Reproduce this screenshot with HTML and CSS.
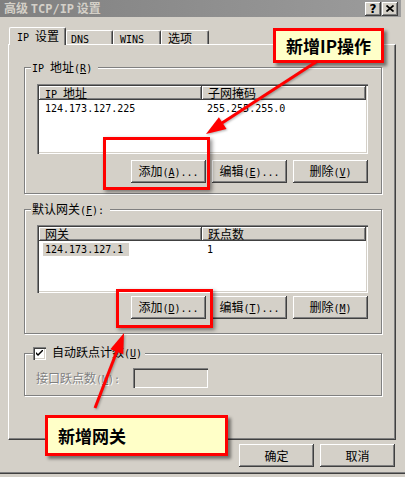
FILE: index.html
```html
<!DOCTYPE html>
<html lang="zh-CN">
<head>
    <meta charset="UTF-8">
    <meta name="viewport" content="width=device-width, initial-scale=1.0">
    <title>高级 TCP/IP 设置</title>
    <link rel="stylesheet" href="styles.css">
</head>
<body>
    <div class="window">
        <div class="titlebar">
            <span class="title">高级 <span class="en">TCP/IP</span> 设置</span>
            <div class="caption-btns">
                <span class="cap-btn">?</span>
                <span class="cap-btn">
                    <svg width="8" height="7" viewBox="0 0 8 7"><path d="M0.5 0.5 L7.5 6.5 M7.5 0.5 L0.5 6.5" stroke="#000" stroke-width="1.7"/></svg>
                </span>
            </div>
        </div>

        <div class="tabs">
            <div class="tab active"><span class="en">IP </span>设置</div>
            <div class="tab tab-dns"><span class="en">DNS</span></div>
            <div class="tab tab-wide"><span class="en">WINS</span></div>
            <div class="tab tab-wide">选项</div>
        </div>

        <div class="panel">
            <!-- IP addresses -->
            <fieldset class="group group-ip">
                <legend><span class="en">IP </span>地址<span class="en">(<u>R</u>)</span></legend>
                <div class="listview lv-ip">
                    <div class="lv-head">
                        <div class="c1"><span class="en">IP </span>地址</div>
                        <div class="c2">子网掩码</div>
                    </div>
                    <div class="lv-row">
                        <div class="c1"><span class="en">124.173.127.225</span></div>
                        <div class="c2"><span class="en">255.255.255.0</span></div>
                    </div>
                </div>
                <div class="btn-row row-ip">
                    <button class="btn">添加<span class="en">(<u>A</u>)...</span></button>
                    <button class="btn">编辑<span class="en">(<u>E</u>)...</span></button>
                    <button class="btn">删除<span class="en">(<u>V</u>)</span></button>
                </div>
            </fieldset>

            <!-- default gateways -->
            <fieldset class="group group-gw">
                <legend>默认网关<span class="en">(<u>F</u>):</span></legend>
                <div class="listview lv-gw">
                    <div class="lv-head">
                        <div class="c1">网关</div>
                        <div class="c2">跃点数</div>
                    </div>
                    <div class="lv-row">
                        <div class="c1"><span class="sel en">124.173.127.1</span></div>
                        <div class="c2"><span class="en">1</span></div>
                    </div>
                </div>
                <div class="btn-row row-gw">
                    <button class="btn">添加<span class="en">(<u>D</u>)...</span></button>
                    <button class="btn">编辑<span class="en">(<u>T</u>)...</span></button>
                    <button class="btn">删除<span class="en">(<u>M</u>)</span></button>
                </div>
            </fieldset>

            <!-- metric -->
            <fieldset class="group group-metric">
                <legend>
                    <span class="checkbox">
                        <svg width="7" height="7" viewBox="0 0 7 7"><path d="M0 2 L0 4 L2 6 L7 1 L7 -1 L2 4 Z" fill="#000"/></svg>
                    </span>
                    <span>自动跃点计数<span class="en">(<u>U</u>)</span></span>
                </legend>
                <div class="metric-row">
                    <span class="disabled">接口跃点数<span class="en">(<u>M</u>):</span></span>
                    <span class="field"></span>
                </div>
            </fieldset>
        </div>

        <div class="dialog-btns">
            <button class="btn">确定</button>
            <button class="btn">取消</button>
        </div>

        <!-- annotations drawn over the dialog -->
        <div class="mark mark-ip"></div>
        <div class="mark mark-gw"></div>
        <div class="callout callout-ip">新增IP操作</div>
        <div class="callout callout-gw">新增网关</div>
        <svg class="arrows" width="405" height="477" viewBox="0 0 405 477">
            <line x1="316" y1="62" x2="222" y2="123" stroke="#f00" stroke-width="3"/>
            <polygon points="206,134 226.5,129 218.9,117.2" fill="#f00"/>
            <line x1="95" y1="408" x2="117" y2="351" stroke="#f00" stroke-width="3"/>
            <polygon points="124,333 123.3,354.2 110.3,349.2" fill="#f00"/>
        </svg>
    </div>
</body>
</html>
```

FILE: styles.css
```css
/* Classic Windows dialog look */
* {
    box-sizing: border-box;
}

body {
    margin: 0;
    background: #d4d0c8;
    font: 12px/1 "Noto Sans CJK SC", "DejaVu Sans", sans-serif;
    color: #000;
}

.en {
    font-family: "DejaVu Sans Mono", monospace;
    font-size: 10px;
}

.window {
    position: relative;
    width: 405px;
    height: 474px;
    background: #d4d0c8;
    box-shadow: inset 0 -1px #404040, inset 0 -2px #808080;
    overflow: hidden;
}

/* title bar */
.titlebar {
    display: flex;
    align-items: center;
    width: 401px;
    height: 17px;
    padding: 0 3px 0 4px;
    background: linear-gradient(90deg, #808080, #9c9c9c);
}

.title {
    color: #d4d0c8;
    font-weight: bold;
    line-height: 17px;
}

.title .en {
    font-size: 12px;
}

.caption-btns {
    display: flex;
    gap: 1px;
    margin-left: auto;
}

.cap-btn {
    display: flex;
    justify-content: center;
    align-items: center;
    width: 16px;
    height: 14px;
    background: #d4d0c8;
    box-shadow: inset -1px -1px #404040, inset 1px 1px #fff, inset -2px -2px #808080;
    font: bold 12px "DejaVu Sans", sans-serif;
}

/* tabs */
.tabs {
    position: relative;
    z-index: 1;
    display: flex;
    align-items: flex-end;
    height: 17px;
    margin: 10px 0 0 9px;
}

.tab {
    height: 14px;
    padding-left: 6px;
    border-top: 1px solid #fff;
    border-left: 1px solid #fff;
    border-right: 1px solid #404040;
    border-radius: 2px 2px 0 0;
    box-shadow: inset -1px 0 #808080;
    background: #d4d0c8;
    line-height: 13px;
}

.tab.active {
    width: 57px;
    height: 18px;
    margin-bottom: -1px;
    padding-left: 7px;
    line-height: 15px;
}

.tab-dns {
    width: 47px;
    padding-left: 4px;
}

.tab-wide {
    width: 48px;
}

.panel {
    width: 388px;
    height: 396px;
    margin-left: 8px;
    border-top: 1px solid #fff;
    border-left: 1px solid #fff;
    border-right: 1px solid #404040;
    border-bottom: 1px solid #404040;
    box-shadow: inset -1px -1px #808080;
}

/* group boxes */
.group {
    margin: 0 13px 0 15px;
    border: 1px solid #808080;
    box-shadow: inset 1px 1px #fff, 1px 1px #fff;
    min-width: 0;
}

.group legend {
    margin-left: -6px;
    padding: 0 6px 0 1px;
    line-height: 13px;
    background: #d4d0c8;
}

.group-ip {
    margin-top: 15px;
    padding: 9px 13px 10px 12px;
}

.group-gw {
    margin-top: 8px;
    padding: 8px 13px 14px 12px;
}

.group-metric {
    margin-top: 11px;
    padding: 7px 13px 7px 11px;
}

.group-metric legend {
    display: flex;
    align-items: center;
    gap: 6px;
    margin-left: -3px;
    padding: 0 3px 0 0;
    line-height: 14px;
}

/* list views */
.listview {
    padding: 2px;
    background: #fff;
    box-shadow: inset 1px 1px #808080, inset 2px 2px #404040, inset -1px -1px #fff, inset -2px -2px #d4d0c8;
}

.lv-ip {
    height: 70px;
}

.lv-gw {
    height: 68px;
}

.lv-head {
    display: flex;
    height: 14px;
}

.lv-head div {
    padding-left: 6px;
    background: #d4d0c8;
    box-shadow: inset -1px -1px #404040, inset 1px 1px #fff, inset -2px -2px #808080;
    line-height: 14px;
}

.lv-head .c1,
.lv-row .c1 {
    width: 163px;
}

.lv-head .c2,
.lv-row .c2 {
    flex: 1;
}

.lv-row {
    display: flex;
    height: 13px;
    line-height: 13px;
}

.lv-row .c1 {
    padding-left: 6px;
}

.lv-row .c2 {
    padding-left: 5px;
}

.sel {
    display: inline-block;
    margin-left: -2px;
    padding: 0 6px 0 2px;
    background: #d4d0c8;
}

/* buttons */
.btn-row {
    display: flex;
    justify-content: flex-end;
    gap: 6px;
}

.row-ip {
    margin-top: 6px;
}

.row-gw {
    margin-top: 3px;
}

.btn {
    width: 75px;
    height: 23px;
    padding: 0;
    border: none;
    background: #d4d0c8;
    box-shadow: inset -1px -1px #404040, inset 1px 1px #fff, inset -2px -2px #808080;
    font: inherit;
    color: #000;
    text-align: center;
}

.dialog-btns {
    display: flex;
    justify-content: flex-end;
    gap: 6px;
    margin: 4px 10px 0 0;
}

/* metric row */
.checkbox {
    display: flex;
    justify-content: center;
    align-items: center;
    width: 13px;
    height: 13px;
    background: #fff;
    box-shadow: inset 1px 1px #808080, inset 2px 2px #404040, inset -1px -1px #fff, inset -2px -2px #d4d0c8;
}

.metric-row {
    display: flex;
    align-items: center;
    gap: 13px;
    height: 20px;
}

.disabled {
    width: 84px;
    color: #808080;
    text-shadow: 1px 1px #fff;
    white-space: nowrap;
}

.field {
    width: 75px;
    height: 20px;
    background: #d4d0c8;
    box-shadow: inset 1px 1px #808080, inset 2px 2px #404040, inset -1px -1px #fff, inset -2px -2px #d4d0c8;
}

/* annotations */
.mark {
    position: absolute;
    border: 3px solid #f00;
    box-shadow: 2px 2px 4px rgba(0, 0, 0, 0.45);
}

.mark-ip {
    left: 103px;
    top: 137px;
    width: 107px;
    height: 53px;
}

.mark-gw {
    left: 116px;
    top: 289px;
    width: 97px;
    height: 39px;
}

.callout {
    position: absolute;
    display: flex;
    align-items: center;
    border: 3px solid #f00;
    background: #ffffc8;
    box-shadow: 3px 3px 3px rgba(0, 0, 0, 0.45);
    font-size: 17px;
    font-weight: bold;
}

.callout-ip {
    left: 273px;
    top: 28px;
    width: 111px;
    height: 35px;
    justify-content: center;
}

.callout-gw {
    left: 45px;
    top: 415px;
    width: 183px;
    height: 41px;
    padding-left: 10px;
}

.arrows {
    position: absolute;
    left: 0;
    top: 0;
    pointer-events: none;
    filter: drop-shadow(1px 1px 1px rgba(0, 0, 0, 0.3));
}
```
